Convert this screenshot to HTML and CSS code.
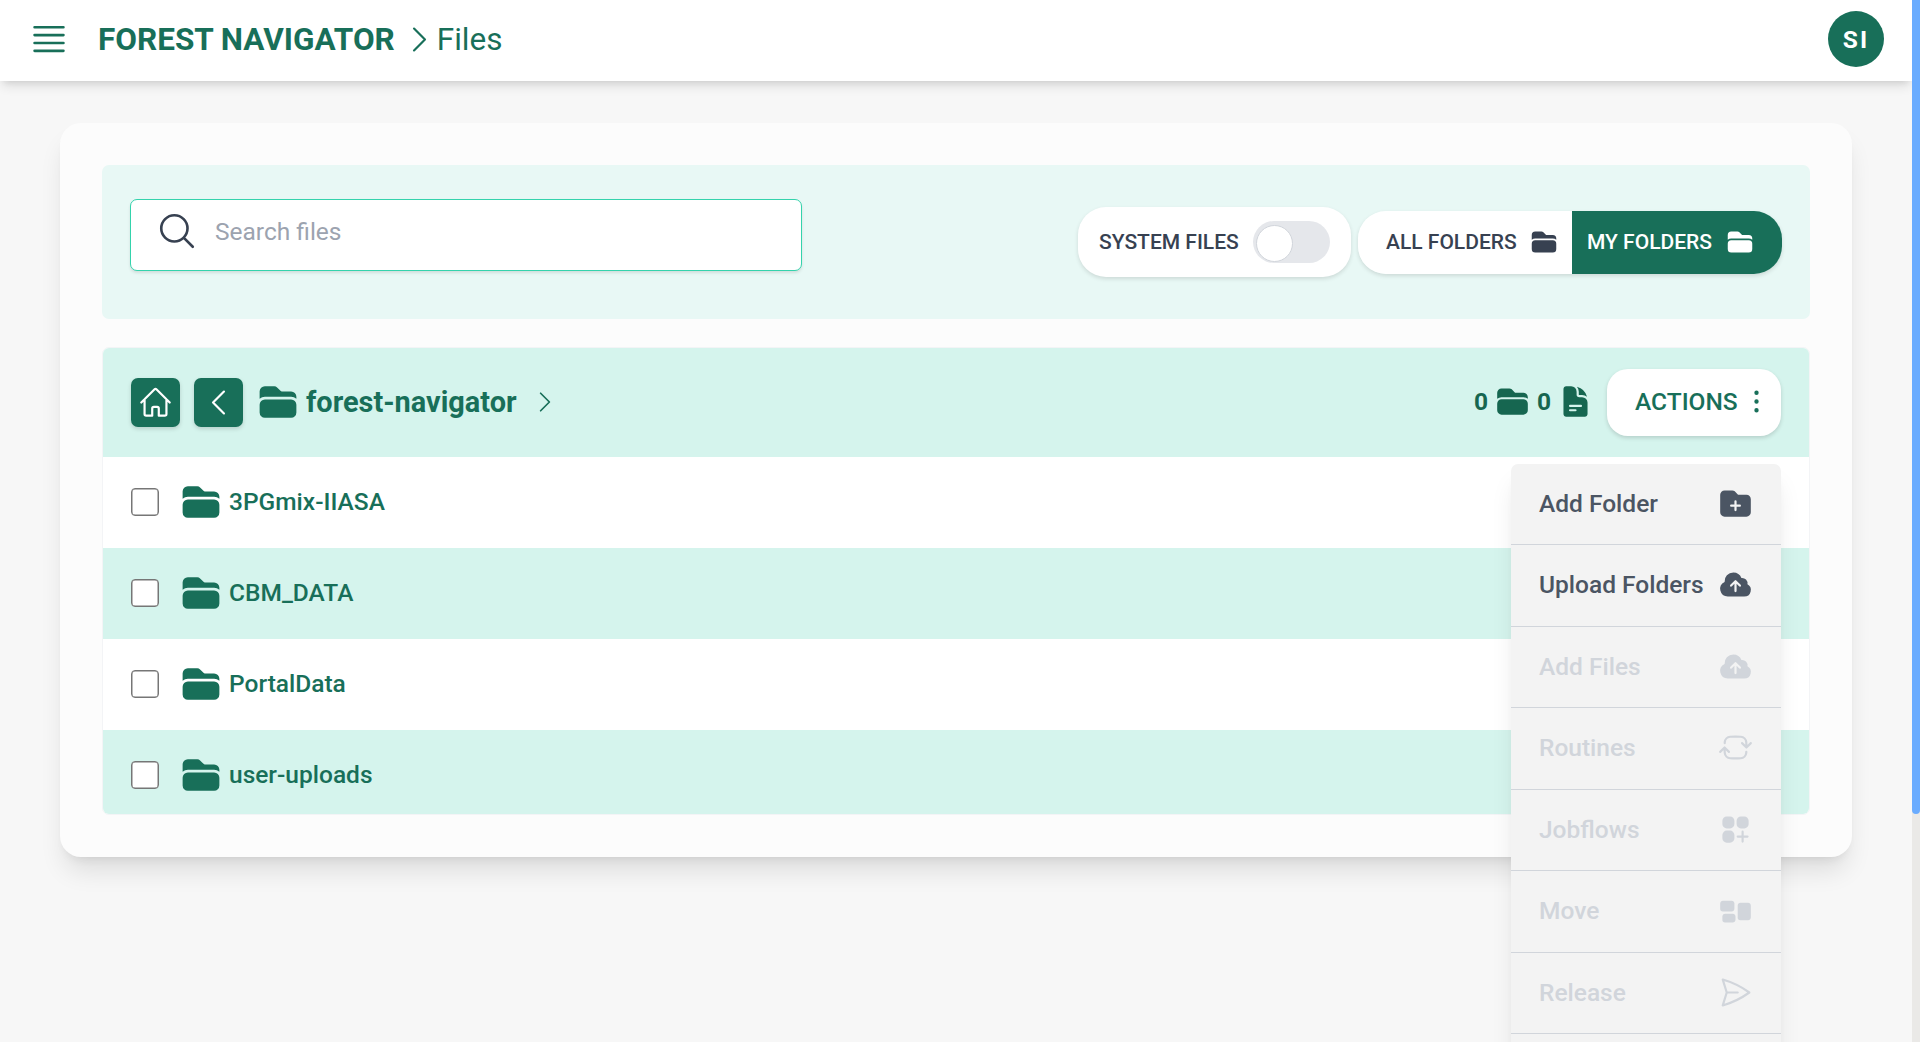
FILE: index.html
```html
<!DOCTYPE html>
<html lang="en">
  <head>
    <meta charset="UTF-8" />
    <meta name="viewport" content="width=device-width, initial-scale=1.0" />
    <title>Forest Navigator - Files</title>
    <link rel="stylesheet" href="styles.css">
  </head>
  <body>
    <!-- Shared icons -->
    <svg class="sprite" aria-hidden="true">
      <symbol id="folder" viewBox="0 0 24 24">
        <path fill="currentColor" d="M19.5 21a3 3 0 0 0 3-3v-4.5a3 3 0 0 0-3-3h-15a3 3 0 0 0-3 3V18a3 3 0 0 0 3 3h15ZM1.5 10.146V6a3 3 0 0 1 3-3h5.379a2.25 2.25 0 0 1 1.59.659l2.122 2.121c.14.141.331.22.53.22H19.5a3 3 0 0 1 3 3v1.146A4.483 4.483 0 0 0 19.5 9h-15a4.483 4.483 0 0 0-3 1.146Z" />
      </symbol>
      <symbol id="chevron" viewBox="0 0 24 24">
        <path class="line" d="m8.25 4.5 7.5 7.5-7.5 7.5" />
      </symbol>
      <symbol id="cloud" viewBox="0 0 24 24">
        <path fill="currentColor" fill-rule="evenodd" d="M10.5 3.75a6 6 0 0 0-5.98 6.496A5.25 5.25 0 0 0 6.75 20.25H18a4.5 4.5 0 0 0 2.206-8.423 3.75 3.75 0 0 0-4.133-4.303A6.001 6.001 0 0 0 10.5 3.75Zm2.03 5.47a.75.75 0 0 0-1.06 0l-3 3a.75.75 0 1 0 1.06 1.06l1.72-1.72v4.94a.75.75 0 0 0 1.5 0v-4.94l1.72 1.72a.75.75 0 1 0 1.06-1.06l-3-3Z" />
      </symbol>
    </svg>

    <div class="page">
      <header class="topbar">
        <svg class="icon-lg" viewBox="0 0 24 24"><path class="line" d="M3.75 5.25h16.5m-16.5 4.5h16.5m-16.5 4.5h16.5m-16.5 4.5h16.5" /></svg>
        <h1>FOREST NAVIGATOR</h1>
        <svg class="icon-md"><use href="#chevron" /></svg>
        <span class="current">Files</span>
        <div class="avatar">SI</div>
      </header>

      <main class="card">
        <section class="filters">
          <div class="search">
            <svg class="icon-lg" viewBox="0 0 24 24"><path class="line" d="m21 21-5.197-5.197m0 0A7.5 7.5 0 1 0 5.196 5.196a7.5 7.5 0 0 0 10.607 10.607Z" /></svg>
            <input type="text" placeholder="Search files" />
          </div>
          <div class="filter-buttons">
            <label class="system">SYSTEM FILES <span class="toggle"></span></label>
            <div class="scope">
              <button type="button" class="all">ALL FOLDERS <svg class="icon-sm"><use href="#folder" /></svg></button>
              <button type="button" class="mine">MY FOLDERS <svg class="icon-sm"><use href="#folder" /></svg></button>
            </div>
          </div>
        </section>

        <section class="files">
          <div class="files-head">
            <button type="button" class="nav-button">
              <svg class="icon-md" viewBox="0 0 24 24"><path class="line" d="m2.25 12 8.954-8.955c.44-.439 1.152-.439 1.591 0L21.75 12M4.5 9.75v10.125c0 .621.504 1.125 1.125 1.125H9.75v-4.875c0-.621.504-1.125 1.125-1.125h2.25c.621 0 1.125.504 1.125 1.125V21h4.125c.621 0 1.125-.504 1.125-1.125V9.75" /></svg>
            </button>
            <button type="button" class="nav-button">
              <svg class="icon-md flip"><use href="#chevron" /></svg>
            </button>
            <div class="crumb">
              <svg class="icon-lg"><use href="#folder" /></svg>
              <h2>forest-navigator</h2>
              <svg class="icon-sm"><use href="#chevron" /></svg>
            </div>

            <div class="counts">
              <span>0</span>
              <svg class="icon-md"><use href="#folder" /></svg>
              <span>0</span>
              <svg class="icon-md" viewBox="0 0 24 24">
                <path fill="currentColor" fill-rule="evenodd" d="M5.625 1.5c-1.036 0-1.875.84-1.875 1.875v17.25c0 1.035.84 1.875 1.875 1.875h12.75c1.035 0 1.875-.84 1.875-1.875V12.75A3.75 3.75 0 0 0 16.5 9h-1.875a1.875 1.875 0 0 1-1.875-1.875V5.25A3.75 3.75 0 0 0 9 1.5H5.625ZM7.5 15a.75.75 0 0 1 .75-.75h7.5a.75.75 0 0 1 0 1.5h-7.5A.75.75 0 0 1 7.5 15Zm.75 2.25a.75.75 0 0 0 0 1.5H12a.75.75 0 0 0 0-1.5H8.25Z" />
                <path fill="currentColor" d="M12.971 1.816A5.23 5.23 0 0 1 14.25 5.25v1.875c0 .207.168.375.375.375H16.5a5.23 5.23 0 0 1 3.434 1.279 9.768 9.768 0 0 0-6.963-6.963Z" />
              </svg>
            </div>

            <div class="actions">
              <button type="button" class="actions-button">ACTIONS
                <svg class="icon-md" viewBox="0 0 24 24"><path class="line" d="M12 6.75a.75.75 0 1 1 0-1.5.75.75 0 0 1 0 1.5ZM12 12.75a.75.75 0 1 1 0-1.5.75.75 0 0 1 0 1.5ZM12 18.75a.75.75 0 1 1 0-1.5.75.75 0 0 1 0 1.5Z" /></svg>
              </button>
              <ul class="menu">
                <li>Add Folder
                  <svg class="icon-md" viewBox="0 0 24 24"><path fill="currentColor" fill-rule="evenodd" d="M19.5 21a3 3 0 0 0 3-3V9a3 3 0 0 0-3-3h-5.379a.75.75 0 0 1-.53-.22L11.47 3.66A2.25 2.25 0 0 0 9.879 3H4.5a3 3 0 0 0-3 3v12a3 3 0 0 0 3 3h15Zm-6.75-10.5a.75.75 0 0 0-1.5 0v2.25H9a.75.75 0 0 0 0 1.5h2.25v2.25a.75.75 0 0 0 1.5 0v-2.25H15a.75.75 0 0 0 0-1.5h-2.25V10.5Z" /></svg>
                </li>
                <li>Upload Folders <svg class="icon-md"><use href="#cloud" /></svg></li>
                <li class="disabled">Add Files <svg class="icon-md"><use href="#cloud" /></svg></li>
                <li class="disabled">Routines
                  <svg class="icon-md" viewBox="0 0 24 24"><path class="line" d="M19.5 12c0-1.232-.046-2.453-.138-3.662a4.006 4.006 0 0 0-3.7-3.7 48.678 48.678 0 0 0-7.324 0 4.006 4.006 0 0 0-3.7 3.7c-.017.22-.032.441-.046.662M19.5 12l3-3m-3 3-3-3m-12 3c0 1.232.046 2.453.138 3.662a4.006 4.006 0 0 0 3.7 3.7 48.656 48.656 0 0 0 7.324 0 4.006 4.006 0 0 0 3.7-3.7c.017-.22.032-.441.046-.662M4.5 12l3 3m-3-3-3 3" /></svg>
                </li>
                <li class="disabled">Jobflows
                  <svg class="icon-md" viewBox="0 0 24 24"><path fill="currentColor" d="M6 3a3 3 0 0 0-3 3v2.25a3 3 0 0 0 3 3h2.25a3 3 0 0 0 3-3V6a3 3 0 0 0-3-3H6ZM15.75 3a3 3 0 0 0-3 3v2.25a3 3 0 0 0 3 3H18a3 3 0 0 0 3-3V6a3 3 0 0 0-3-3h-2.25ZM6 12.75a3 3 0 0 0-3 3V18a3 3 0 0 0 3 3h2.25a3 3 0 0 0 3-3v-2.25a3 3 0 0 0-3-3H6ZM17.625 13.5a.75.75 0 0 0-1.5 0v2.625H13.5a.75.75 0 0 0 0 1.5h2.625v2.625a.75.75 0 0 0 1.5 0v-2.625h2.625a.75.75 0 0 0 0-1.5h-2.625V13.5Z" /></svg>
                </li>
                <li class="disabled">Move
                  <svg class="icon-md" viewBox="0 0 24 24"><path fill="currentColor" fill-rule="evenodd" d="M1.5 7.125c0-1.036.84-1.875 1.875-1.875h6c1.036 0 1.875.84 1.875 1.875v3.75c0 1.036-.84 1.875-1.875 1.875h-6A1.875 1.875 0 0 1 1.5 10.875v-3.75Zm12 1.5c0-1.036.84-1.875 1.875-1.875h5.25c1.035 0 1.875.84 1.875 1.875v8.25c0 1.035-.84 1.875-1.875 1.875h-5.25a1.875 1.875 0 0 1-1.875-1.875v-8.25ZM3 16.125c0-1.036.84-1.875 1.875-1.875h5.25c1.036 0 1.875.84 1.875 1.875v2.25c0 1.035-.84 1.875-1.875 1.875h-5.25A1.875 1.875 0 0 1 3 18.375v-2.25Z" /></svg>
                </li>
                <li class="disabled">Release
                  <svg class="icon-md" viewBox="0 0 24 24"><path class="line" d="M6 12 3.269 3.125A59.769 59.769 0 0 1 21.485 12 59.768 59.768 0 0 1 3.27 20.875L5.999 12Zm0 0h7.5" /></svg>
                </li>
                <li class="disabled"></li>
              </ul>
            </div>
          </div>

          <div class="row"><input type="checkbox" /><svg class="icon-lg"><use href="#folder" /></svg>3PGmix-IIASA</div>
          <div class="row"><input type="checkbox" /><svg class="icon-lg"><use href="#folder" /></svg>CBM_DATA</div>
          <div class="row"><input type="checkbox" /><svg class="icon-lg"><use href="#folder" /></svg>PortalData</div>
          <div class="row"><input type="checkbox" /><svg class="icon-lg"><use href="#folder" /></svg>user-uploads</div>
        </section>
      </main>
    </div>

    <div class="scroll-track">
      <div class="scroll-thumb"></div>
    </div>
  </body>
</html>
```
FILE: styles.css
```css
* {
  box-sizing: border-box;
}

body {
  margin: 0;
  height: 100vh;
  display: flex;
  overflow: hidden;
  font-family: Roboto, sans-serif;
  font-size: 24.5px;
  color: #186f59;
  background-color: #f7f7f7;
}

h1,
h2,
ul {
  margin: 0;
  padding: 0;
}

button,
input {
  font-family: inherit;
}

button {
  border: none;
  cursor: pointer;
}

svg {
  display: block;
  flex: none;
}

.sprite {
  display: none;
}

.line {
  fill: none;
  stroke: currentColor;
  stroke-width: 1.5;
  stroke-linecap: round;
  stroke-linejoin: round;
}

.icon-sm {
  width: 28px;
  height: 28px;
}

.icon-md {
  width: 35px;
  height: 35px;
}

.icon-lg {
  width: 42px;
  height: 42px;
}

.flip {
  transform: scaleX(-1);
}

.page {
  flex: 1;
  min-width: 0;
  overflow: hidden;
}

/* Top bar */
.topbar {
  height: 81px;
  padding: 0 28px 3px;
  display: flex;
  align-items: center;
  background-color: #fff;
  box-shadow: 0 7px 10.5px -2px rgba(0, 0, 0, 0.11), 0 3.5px 7px -3.5px rgba(0, 0, 0, 0.11);
}

.topbar h1 {
  margin: 0 7px 0 28px;
  font-size: 31.5px;
  font-weight: 700;
}

.topbar .current {
  font-size: 31.5px;
}

.avatar {
  width: 56px;
  height: 56px;
  margin-left: auto;
  border-radius: 50%;
  display: flex;
  align-items: center;
  justify-content: center;
  font-weight: 700;
  letter-spacing: 2px;
  color: #fff;
  background-color: #186f59;
}

/* Card */
.card {
  height: 734px;
  margin: 42px 60px 0;
  padding: 42px;
  border-radius: 21px;
  background-color: #fcfcfc;
  box-shadow: 0 17.5px 26px -5px rgba(0, 0, 0, 0.11), 0 7px 10.5px -7px rgba(0, 0, 0, 0.11);
}

.filters {
  height: 154px;
  padding: 0 28px;
  border-radius: 7px;
  display: flex;
  align-items: center;
  justify-content: space-between;
  background-color: #e8f8f5;
}

.search {
  width: 672px;
  height: 72px;
  margin-bottom: 14px;
  padding: 0 25px 8px;
  border: 1px solid #34d3ac;
  border-radius: 7px;
  display: flex;
  align-items: center;
  gap: 17px;
  color: #374151;
  background-color: #fff;
  box-shadow: 0 2px 3px rgba(0, 0, 0, 0.1);
}

.search input {
  width: 500px;
  padding: 0;
  border: none;
  outline: none;
  font-size: 24.5px;
}

.search input::placeholder {
  color: #9ca3af;
}

.filter-buttons {
  display: flex;
  align-items: center;
  gap: 7px;
  font-size: 21px;
  font-weight: 500;
}

.system {
  width: 273px;
  height: 70px;
  padding: 0 21px;
  border-radius: 28px;
  display: flex;
  align-items: center;
  justify-content: space-between;
  color: #374151;
  background-color: #fff;
  box-shadow: 0 2px 4px rgba(0, 0, 0, 0.12);
}

.toggle {
  width: 77px;
  height: 42px;
  padding: 3.5px 2.5px;
  border-radius: 21px;
  background-color: #e5e7eb;
}

.toggle::before {
  content: "";
  display: block;
  width: 35px;
  height: 35px;
  border: 1px solid #d1d5db;
  border-radius: 50%;
  background-color: #fff;
}

.scope {
  height: 63px;
  border-radius: 28px;
  display: flex;
  overflow: hidden;
  box-shadow: 0 2px 4px rgba(0, 0, 0, 0.12);
}

.scope button {
  display: flex;
  align-items: center;
  gap: 14px;
  font-size: 21px;
  font-weight: 500;
}

.scope .all {
  width: 214px;
  padding: 0 0 0 28px;
  gap: 13px;
  color: #374151;
  background-color: #fff;
}

.scope .mine {
  width: 210px;
  padding: 0 0 0 15px;
  color: #fff;
  background-color: #186f59;
}

/* File table */
.files {
  height: 468px;
  margin-top: 28px;
  border: 1px solid #f3f4f6;
  border-radius: 7px;
  background-color: #fff;
}

.files-head {
  height: 109px;
  padding: 0 28px;
  border-radius: 6px 6px 0 0;
  display: flex;
  align-items: center;
  background-color: #d5f4ed;
}

.nav-button {
  width: 49px;
  height: 49px;
  margin-right: 14px;
  padding: 0;
  border-radius: 7px;
  display: flex;
  align-items: center;
  justify-content: center;
  color: #fff;
  background-color: #186f59;
  box-shadow: 0 2px 4px rgba(0, 0, 0, 0.15);
}

.crumb {
  padding-bottom: 2px;
  display: flex;
  align-items: center;
}

.crumb h2 {
  margin: 0 14px 0 7px;
  font-size: 28.9px;
  font-weight: 700;
}

.counts {
  margin-left: auto;
  margin-right: 14px;
  padding-bottom: 2px;
  display: flex;
  align-items: center;
  gap: 7px;
  font-weight: 700;
  color: #166650;
}

.actions {
  position: relative;
}

.actions-button {
  width: 174px;
  height: 67px;
  padding: 0 0 2px 28px;
  border-radius: 21px;
  display: flex;
  align-items: center;
  font-size: 24.5px;
  font-weight: 500;
  color: #186f59;
  background-color: #fff;
  box-shadow: 0 2px 4px rgba(0, 0, 0, 0.15);
}

.actions-button svg {
  margin-left: 1px;
}

.menu {
  position: absolute;
  top: 95px;
  right: 0;
  width: 270px;
  border-radius: 7px;
  list-style: none;
  font-weight: 500;
  color: #4b5563;
  background-color: #f3f3f3;
  box-shadow: 0 17.5px 26px -5px rgba(0, 0, 0, 0.1), 0 7px 10.5px -7px rgba(0, 0, 0, 0.1);
}

.menu li {
  height: 81.5px;
  padding: 0 28px 1.5px;
  border-bottom: 1px solid #d1d5db;
  display: flex;
  align-items: center;
  justify-content: space-between;
  white-space: nowrap;
}

.menu li:first-child {
  height: 81px;
}

.menu .disabled {
  color: #d1d5db;
}

.row {
  height: 91px;
  padding: 0 28px 2px;
  display: flex;
  align-items: center;
  font-weight: 500;
  background-color: #fff;
}

.row:nth-child(odd) {
  background-color: #d5f4ed;
}

.row:last-child {
  height: 84px;
  padding-top: 7px;
  border-radius: 0 0 6px 6px;
}

.row svg {
  margin-right: 7px;
}

.row input {
  appearance: none;
  width: 28px;
  height: 28px;
  margin: 0 21px 0 0;
  border: 1px solid #767676;
  border-radius: 4px;
  background-color: #fff;
  box-shadow: inset 0 0 0 0.5px #767676;
}

/* Scrollbar */
.scroll-track {
  width: 8px;
  background-color: #eae9e7;
}

.scroll-thumb {
  height: 814px;
  border-radius: 0 0 4px 4px;
  background-color: #6aacff;
}
```
